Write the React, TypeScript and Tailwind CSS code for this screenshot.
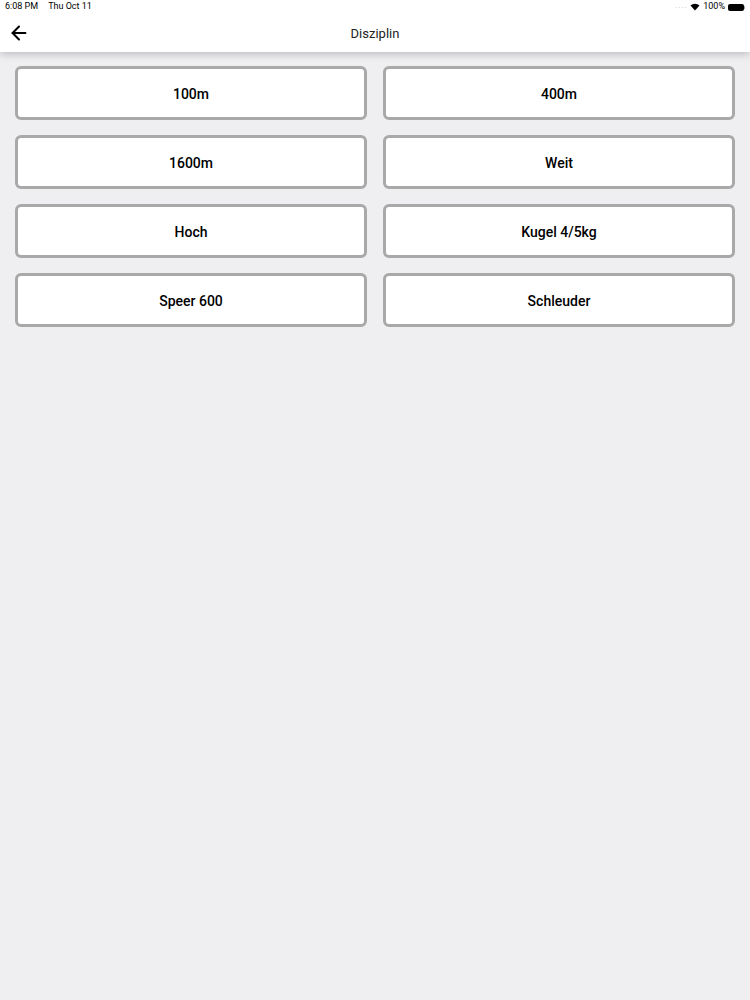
import { ArrowLeft } from 'lucide-react';

const disciplines = ['100m', '400m', '1600m', 'Weit', 'Hoch', 'Kugel 4/5kg', 'Speer 600', 'Schleuder'];

function StatusBar() {
  return (
    <div className="flex h-[14px] items-center justify-between bg-white px-[5px] text-[9px] text-black">
      <div className="flex gap-[10px]">
        <span>6:08 PM</span>
        <span>Thu Oct 11</span>
      </div>
      <div className="flex items-center gap-[3px]">
        <span className="tracking-[1px] text-[6px] text-gray-300">••••</span>
        <svg width="10" height="8" viewBox="0 0 10 8">
          <path d="M5 7.5 L0.5 2.6 A6.5 6.5 0 0 1 9.5 2.6 Z" fill="#000" />
        </svg>
        <span>100%</span>
        <div className="flex items-center">
          <div className="h-[7px] w-[16px] rounded-[2px] bg-black" />
          <div className="h-[3px] w-[1px] bg-gray-400" />
        </div>
      </div>
    </div>
  );
}

export default function App() {
  return (
    <div className="min-h-[1000px] bg-[#efeef1]" style={{ fontFamily: 'Roboto, "Noto Sans", sans-serif' }}>
      <div className="relative z-10 bg-white shadow-[0_2px_8px_rgba(0,0,0,0.22)]">
        <StatusBar />
        <div className="relative flex h-[38px] items-center justify-center">
          <button className="absolute left-[8px] top-[8px] text-black">
            <ArrowLeft className="h-[22px] w-[22px]" strokeWidth={2.2} />
          </button>
          <h1 className="mt-[2px] text-[13px] text-[#222]">Disziplin</h1>
        </div>
      </div>
      <div className="grid grid-cols-2 gap-x-[16px] gap-y-[15px] px-[15px] pt-[14px]">
        {disciplines.map((d) => (
          <button
            key={d}
            className="flex h-[54px] items-center justify-center rounded-[6px] border-[3px] border-[#a9a9a9] bg-white pt-[2px] text-[14px] font-medium text-black"
          >
            {d}
          </button>
        ))}
      </div>
    </div>
  );
}
